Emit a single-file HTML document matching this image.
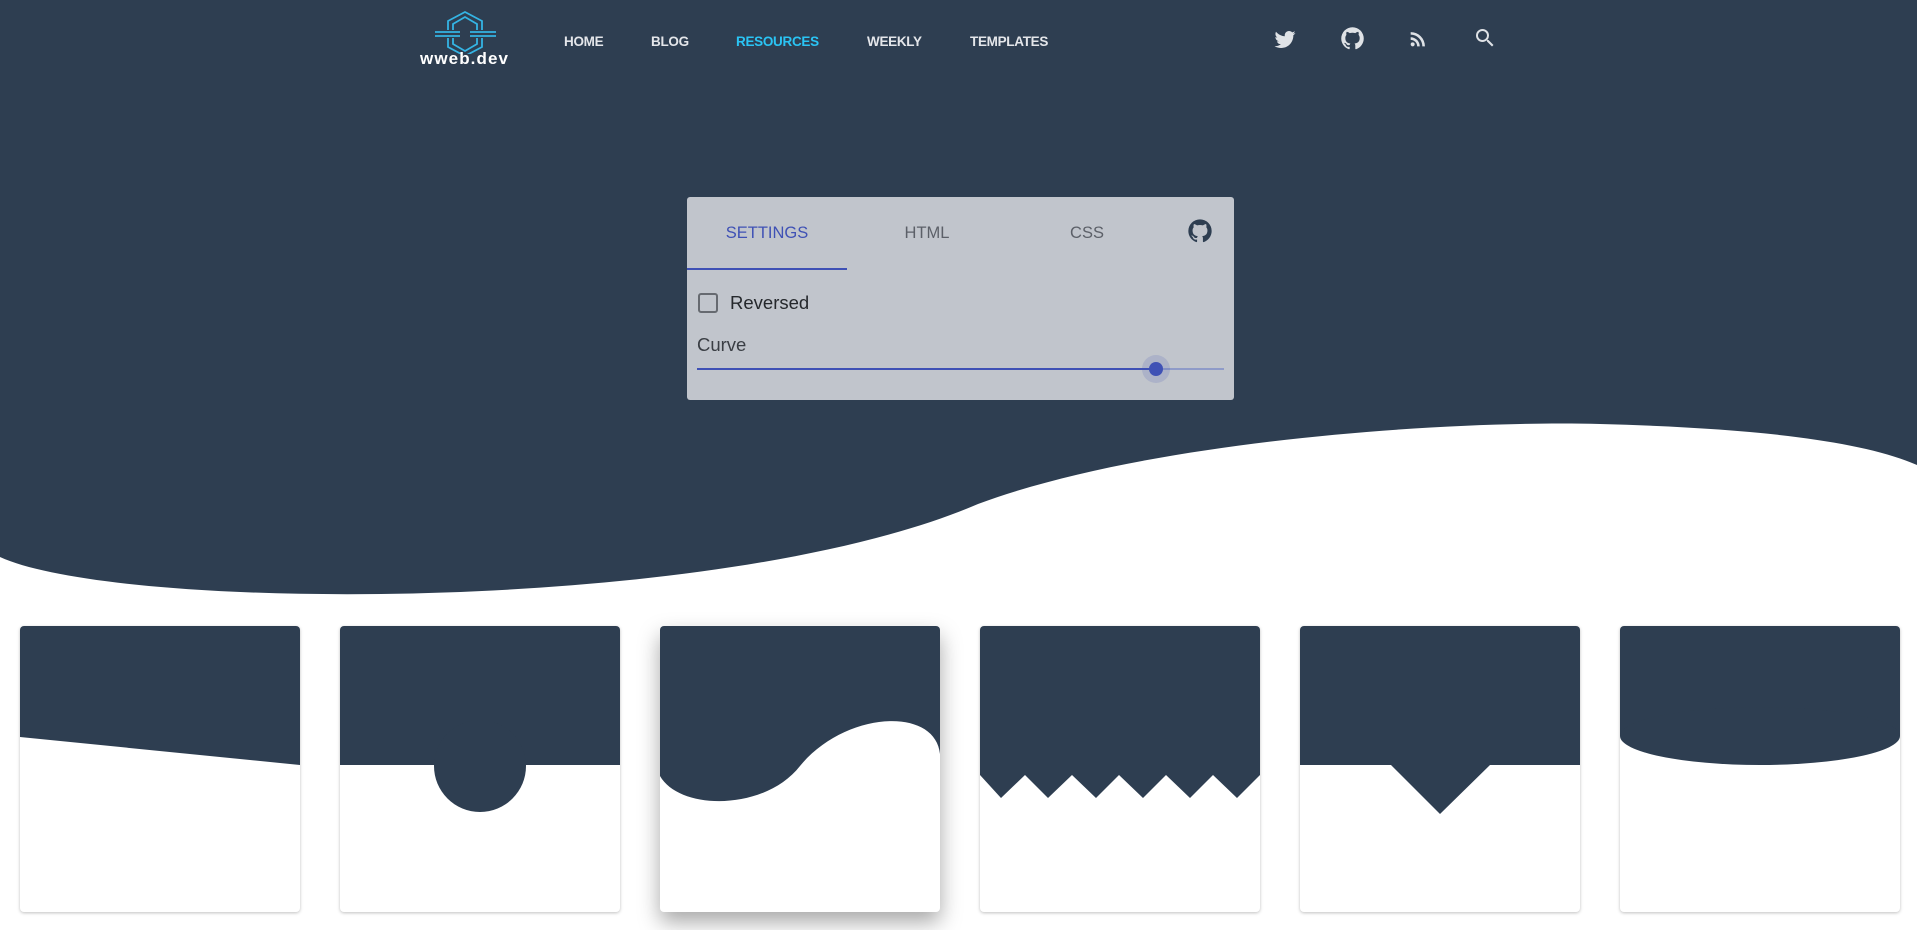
<!DOCTYPE html>
<html><head><meta charset="utf-8"><style>
*{margin:0;padding:0;box-sizing:border-box}
body{width:1917px;height:930px;overflow:hidden;background:#fff;font-family:"Liberation Sans",sans-serif;position:relative}
.abs{position:absolute}
.nav{position:absolute;top:34px;font-size:13.5px;font-weight:bold;color:#e4e6ea;letter-spacing:-0.3px}
.card{position:absolute;top:626px;width:280px;height:286px;border-radius:4px;overflow:hidden;background:#fff;box-shadow:0 1px 3px rgba(0,0,0,.25)}
.card svg{display:block}
</style></head><body>
<svg class="abs" style="left:0;top:0" width="1917" height="930">
<path d="M0 0 H1917 V465 C1860 440 1750 428 1600 424 C1450 420 1150 440 978 504 C720 615 120 612 0 557 Z" fill="#2e3e51"/>
</svg>
<!-- logo -->
<svg class="abs" style="left:430px;top:10px" width="70" height="44" viewBox="430 10 70 44">
<g fill="none" stroke="#34b4e4" stroke-width="1.8">
<path d="M453 30 V24 L465 17 L477 24 V30"/><path d="M453 38 V44 L465 51 L477 44 V38"/>
<path d="M448 30 V21 L465 12 L482 21 V30"/><path d="M448 38 V47 L465 56 L482 47 V38"/>
<path d="M435 32 H460 M435 36 H460 M470 32 H496 M470 36 H496"/>
</g></svg>
<div class="abs" style="left:420px;top:49px;font-size:17px;font-weight:bold;color:#fff;letter-spacing:1.1px">wweb.dev</div>
<div class="nav" style="left:564px">HOME</div>
<div class="nav" style="left:651px">BLOG</div>
<div class="nav" style="left:736px;color:#2ac4f4">RESOURCES</div>
<div class="nav" style="left:867px">WEEKLY</div>
<div class="nav" style="left:970px">TEMPLATES</div>
<!-- icons -->
<svg class="abs" style="left:1273px;top:27px" width="24" height="24" viewBox="0 0 24 24"><path fill="#dfe2e6" d="M22.46 6c-.77.35-1.6.58-2.46.69.88-.53 1.56-1.370 1.88-2.38-.83.5-1.75.85-2.72 1.05C18.37 4.5 17.26 4 16 4c-2.35 0-4.27 1.92-4.27 4.29 0 .34.04.67.11.98C8.28 9.09 5.11 7.38 3 4.79c-.37.63-.58 1.37-.58 2.15 0 1.49.75 2.81 1.91 3.56-.71 0-1.37-.2-1.95-.5v.03c0 2.08 1.48 3.82 3.44 4.21a4.22 4.22 0 0 1-1.93.07 4.28 4.28 0 0 0 4 2.98 8.52 8.52 0 0 1-5.33 1.84c-.34 0-.68-.02-1.02-.06C3.44 20.29 5.7 21 8.12 21 16 21 20.33 14.46 20.33 8.79c0-.19 0-.37-.01-.56.84-.6 1.56-1.36 2.14-2.23z"/></svg>
<svg class="abs" style="left:1339px;top:25px" width="27" height="27" viewBox="0 0 24 24"><path fill="#dfe2e6" d="M12 2A10 10 0 0 0 2 12c0 4.42 2.87 8.17 6.84 9.5.5.08.66-.23.66-.5v-1.690c-2.77.6-3.36-1.34-3.36-1.34-.46-1.16-1.11-1.47-1.11-1.47-.91-.62.07-.6.07-.6 1 .07 1.53 1.03 1.53 1.03.87 1.52 2.34 1.07 2.91.83.09-.65.35-1.09.63-1.34-2.22-.25-4.55-1.11-4.55-4.92 0-1.11.38-2 1.03-2.71-.1-.25-.45-1.29.1-2.64 0 0 .84-.27 2.75 1.02.79-.22 1.65-.33 2.5-.33.85 0 1.71.11 2.5.33 1.91-1.29 2.75-1.02 2.75-1.02.55 1.35.2 2.39.1 2.64.65.71 1.03 1.6 1.03 2.71 0 3.82-2.34 4.66-4.57 4.91.36.31.69.92.69 1.85V21c0 .27.16.59.67.5C19.14 20.16 22 16.42 22 12A10 10 0 0 0 12 2z"/></svg>
<svg class="abs" style="left:1407px;top:28px" width="22" height="22" viewBox="0 0 24 24"><path fill="#dfe2e6" d="M6.18 15.64a2.18 2.18 0 0 1 2.18 2.18C8.36 19 7.38 20 6.18 20 5 20 4 19 4 17.82a2.18 2.18 0 0 1 2.18-2.18M4 4.44A15.56 15.56 0 0 1 19.56 20h-2.83A12.73 12.73 0 0 0 4 7.27V4.44m0 5.66a9.9 9.9 0 0 1 9.9 9.9h-2.830A7.07 7.07 0 0 0 4 12.93V10.1z"/></svg>
<svg class="abs" style="left:1473px;top:26px" width="24" height="24" viewBox="0 0 24 24"><path fill="#dfe2e6" d="M15.5 14h-.79l-.28-.27A6.47 6.47 0 0 0 16 9.5 6.5 6.5 0 1 0 9.5 16c1.61 0 3.09-.59 4.23-1.57l.27.28v.79l5 4.99L20.49 19l-4.99-5zm-6 0C7.01 14 5 11.99 5 9.5S7.01 5 9.5 5 14 7.01 14 9.5 11.99 14 9.5 14z"/></svg>
<!-- panel -->
<div class="abs" style="left:687px;top:197px;width:547px;height:203px;background:#c1c5cc;border-radius:3px">
<div class="abs" style="left:0;top:27px;width:160px;text-align:center;font-size:16.5px;color:#3f51b5">SETTINGS</div>
<div class="abs" style="left:160px;top:27px;width:160px;text-align:center;font-size:16.5px;color:#5c6068">HTML</div>
<div class="abs" style="left:320px;top:27px;width:160px;text-align:center;font-size:16.5px;color:#5c6068">CSS</div>
<div class="abs" style="left:0;top:71px;width:160px;height:2px;background:#3f51b5"></div>
<svg class="abs" style="left:499px;top:20px" width="28" height="28" viewBox="0 0 24 24"><path fill="#2e3e51" d="M12 2A10 10 0 0 0 2 12c0 4.42 2.87 8.17 6.84 9.5.5.08.66-.23.66-.5v-1.69c-2.77.6-3.36-1.34-3.36-1.34-.46-1.16-1.11-1.47-1.11-1.47-.91-.62.07-.6.07-.6 1 .07 1.53 1.03 1.53 1.03.87 1.52 2.34 1.07 2.91.83.09-.65.35-1.09.63-1.34-2.22-.25-4.55-1.11-4.55-4.92 0-1.11.38-2 1.03-2.71-.1-.25-.45-1.29.1-2.64 0 0 .84-.27 2.75 1.02.79-.22 1.65-.33 2.5-.33.85 0 1.71.11 2.5.33 1.91-1.29 2.75-1.02 2.75-1.02.55 1.35.2 2.39.1 2.64.65.71 1.03 1.6 1.03 2.71 0 3.82-2.34 4.66-4.57 4.91.36.31.69.92.69 1.85V21c0 .27.16.59.67.5C19.14 20.16 22 16.42 22 12A10 10 0 0 0 12 2z"/></svg>
<div class="abs" style="left:11px;top:96px;width:20px;height:20px;border:2.5px solid #666a70;border-radius:3px"></div>
<div class="abs" style="left:43px;top:95px;font-size:18.5px;color:#25282c">Reversed</div>
<div class="abs" style="left:10px;top:137px;font-size:18.5px;color:#3a3e44">Curve</div>
<div class="abs" style="left:10px;top:171px;width:458px;height:2px;background:#3f51b5"></div>
<div class="abs" style="left:468px;top:171px;width:69px;height:2px;background:#8f9bc8"></div>
<div class="abs" style="left:455px;top:158px;width:28px;height:28px;border-radius:50%;background:rgba(63,81,181,.16)"></div>
<div class="abs" style="left:462px;top:165px;width:14px;height:14px;border-radius:50%;background:#3f51b5"></div>
</div>
<!-- cards -->
<div class="card" style="left:20px"><svg width="280" height="286"><path d="M0 0H280V139L0 111Z" fill="#2e3e51"/></svg></div>
<div class="card" style="left:340px"><svg width="280" height="286"><path d="M0 0H280V139H0Z" fill="#2e3e51"/><circle cx="140" cy="140" r="46" fill="#2e3e51"/></svg></div>
<div class="card" style="left:660px;box-shadow:0 10px 22px rgba(0,0,0,.35)"><svg width="280" height="286"><path d="M0 0H280V128 C275 80 185 85 140 140 C105 185 20 185 0 150Z" fill="#2e3e51"/></svg></div>
<div class="card" style="left:980px"><svg width="280" height="286"><path d="M0 0H280V149 L257 172 L233 149 L210 172 L186 149 L163 172 L139 149 L116 172 L92 149 L68 172 L45 149 L21 172 L0 149Z" fill="#2e3e51"/></svg></div>
<div class="card" style="left:1300px"><svg width="280" height="286"><path d="M0 0H280V139H190L140 188L91 139H0Z" fill="#2e3e51"/></svg></div>
<div class="card" style="left:1620px"><svg width="280" height="286"><path d="M0 0H280V110H0Z" fill="#2e3e51"/><ellipse cx="140" cy="110" rx="140" ry="29" fill="#2e3e51"/></svg></div>
</body></html>
